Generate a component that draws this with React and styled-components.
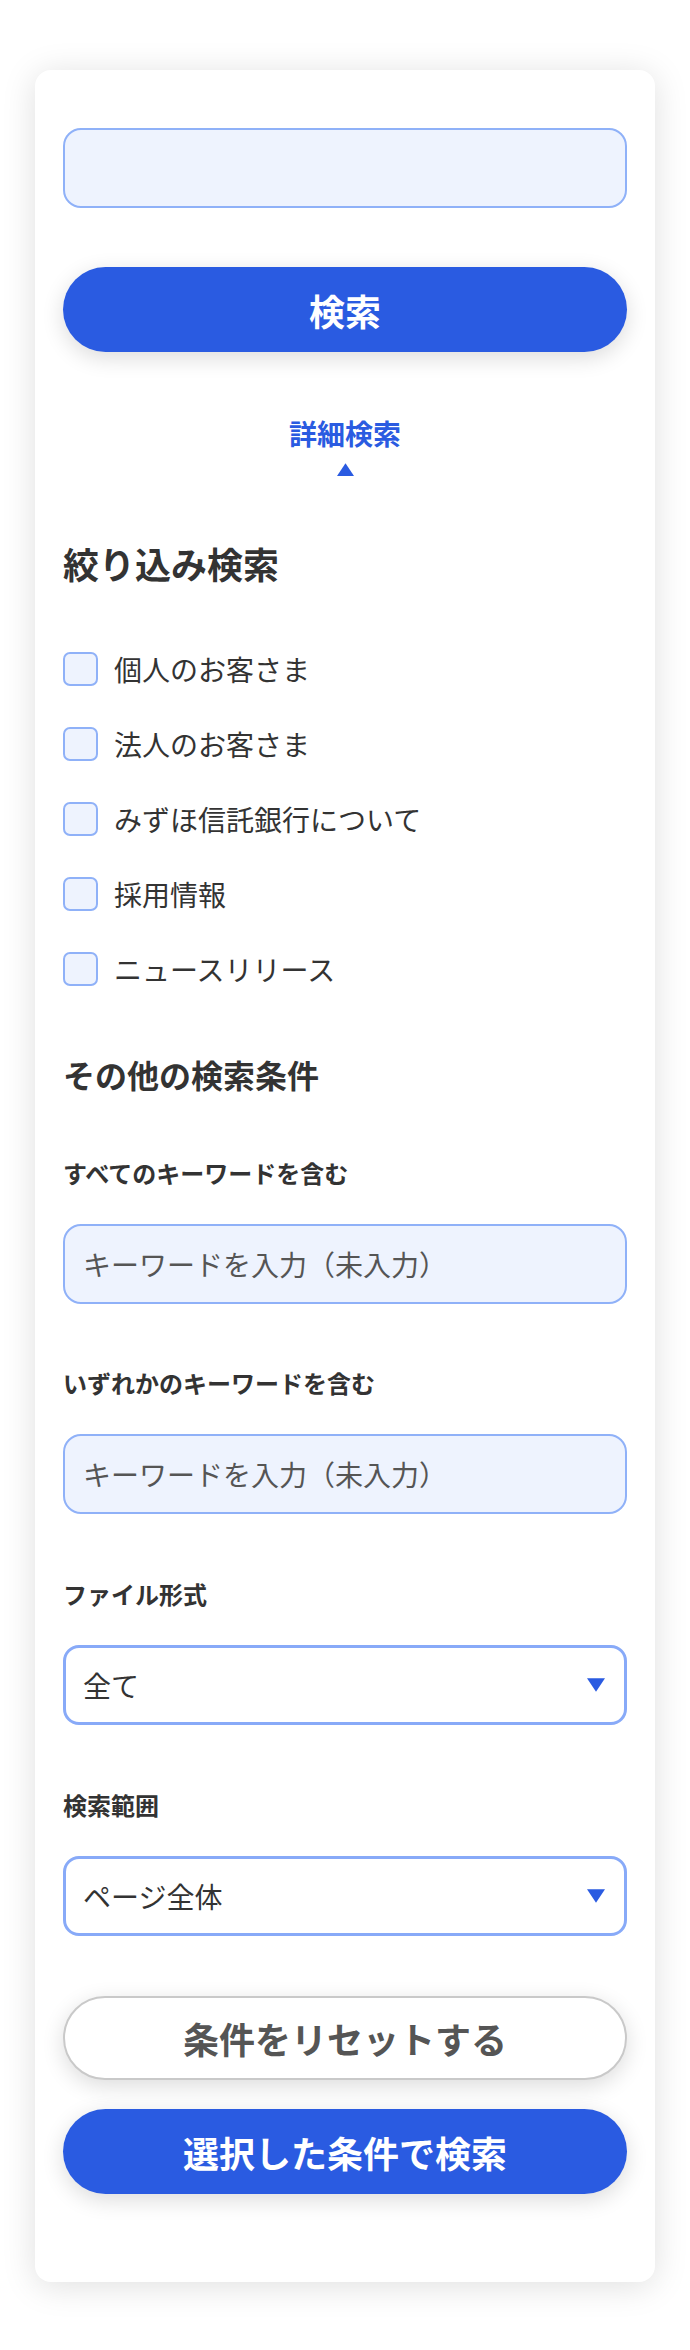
import styled, {createGlobalStyle} from 'styled-components';

const GlobalStyle = createGlobalStyle`
  * {
    box-sizing: border-box;
  }

  body {
    margin: 0;
    background: #fff;
    font-family: 'Noto Sans CJK JP', 'Noto Sans', sans-serif;
    color: #333;
  }
`;

const Page = styled.div`
  padding: 70px 35px 68px;
`;

const Card = styled.div`
  background: #fff;
  border-radius: 16px;
  box-shadow: 0 4px 34px rgba(0, 0, 0, 0.13);
  padding: 58px 28px 88px;
  display: flex;
  flex-direction: column;
`;

const TextInput = styled.input`
  display: block;
  width: 100%;
  height: 80px;
  padding: 0 18px;
  border: 2px solid #8fb1f8;
  border-radius: 18px;
  background: #eef3fe;
  font-family: inherit;
  font-size: 28px;
  color: #333;
  outline: none;

  &::placeholder {
    color: #555;
  }
`;

const PillButton = styled.button`
  display: flex;
  align-items: center;
  justify-content: center;
  width: 100%;
  height: ${({$height}) => $height || 85}px;
  margin-top: ${({$top}) => $top || 0}px;
  border-radius: 999px;
  font-family: inherit;
  font-size: 36px;
  font-weight: 700;
  cursor: pointer;
  border: ${({$outline}) => ($outline ? '2px solid #c9c9c9' : 'none')};
  background: ${({$outline}) => ($outline ? '#fff' : '#2a5be1')};
  color: ${({$outline}) => ($outline ? '#555' : '#fff')};
  box-shadow: 0 6px 22px rgba(0, 0, 0, 0.14);
`;

const Toggle = styled.div`
  margin-top: 67px;
  display: flex;
  flex-direction: column;
  align-items: center;
  gap: 16px;
  color: #2a5be1;
  font-size: 28px;
  font-weight: 700;
  line-height: 28px;
`;

const Heading = styled.h2`
  margin: ${({$top}) => $top}px 0 0;
  font-size: ${({$size}) => $size}px;
  line-height: ${({$size}) => $size}px;
  font-weight: 700;
  color: #333;
`;

const CheckList = styled.div`
  margin-top: 71px;
  display: flex;
  flex-direction: column;
  gap: 41px;
`;

const CheckRow = styled.label`
  display: flex;
  align-items: center;
  gap: 16px;
  height: 34px;
  font-size: 28px;
  color: #333;
`;

const Box = styled.input.attrs({type: 'checkbox'})`
  appearance: none;
  margin: 0;
  width: 35px;
  height: 34px;
  border: 2px solid #8fb1f8;
  border-radius: 7px;
  background: #eef3fe;
`;

const Field = styled.div`
  margin-top: ${({$top}) => $top}px;
  display: flex;
  flex-direction: column;
  gap: 39px;
`;

const FieldLabel = styled.div`
  font-size: 24px;
  line-height: 24px;
  font-weight: 700;
  color: #333;
`;

const Select = styled.div`
  display: flex;
  align-items: center;
  justify-content: space-between;
  height: 80px;
  padding: 0 19px 0 17px;
  border: 3px solid #88aaf8;
  border-radius: 16px;
  background: #fff;
  font-size: 28px;
  color: #333;
`;

const Triangle = ({down, width, height}) => (
  <svg width={width} height={height} viewBox="0 0 16 12">
    <polygon
      points={down ? '0,0 16,0 8,12' : '8,0 16,12 0,12'}
      fill="#2a5be1"
    />
  </svg>
);

const categories = [
  '個人のお客さま',
  '法人のお客さま',
  'みずほ信託銀行について',
  '採用情報',
  'ニュースリリース',
];

const App = () => (
  <Page>
    <GlobalStyle />
    <Card>
      <TextInput aria-label="検索キーワード" />
      <PillButton $top={59}>検索</PillButton>

      <Toggle>
        <span>詳細検索</span>
        <Triangle width={17} height={13} />
      </Toggle>

      <Heading $top={69} $size={36}>
        絞り込み検索
      </Heading>
      <CheckList>
        {categories.map(item => (
          <CheckRow key={item}>
            <Box />
            {item}
          </CheckRow>
        ))}
      </CheckList>

      <Heading $top={72} $size={32}>
        その他の検索条件
      </Heading>

      <Field $top={71}>
        <FieldLabel>すべてのキーワードを含む</FieldLabel>
        <TextInput placeholder="キーワードを入力（未入力）" />
      </Field>
      <Field $top={67}>
        <FieldLabel>いずれかのキーワードを含む</FieldLabel>
        <TextInput placeholder="キーワードを入力（未入力）" />
      </Field>
      <Field $top={68}>
        <FieldLabel>ファイル形式</FieldLabel>
        <Select>
          <span>全て</span>
          <Triangle down width={18} height={14} />
        </Select>
      </Field>
      <Field $top={68}>
        <FieldLabel>検索範囲</FieldLabel>
        <Select>
          <span>ページ全体</span>
          <Triangle down width={18} height={14} />
        </Select>
      </Field>

      <PillButton $outline $top={60} $height={84}>
        条件をリセットする
      </PillButton>
      <PillButton $top={29}>選択した条件で検索</PillButton>
    </Card>
  </Page>
);

export default App;
